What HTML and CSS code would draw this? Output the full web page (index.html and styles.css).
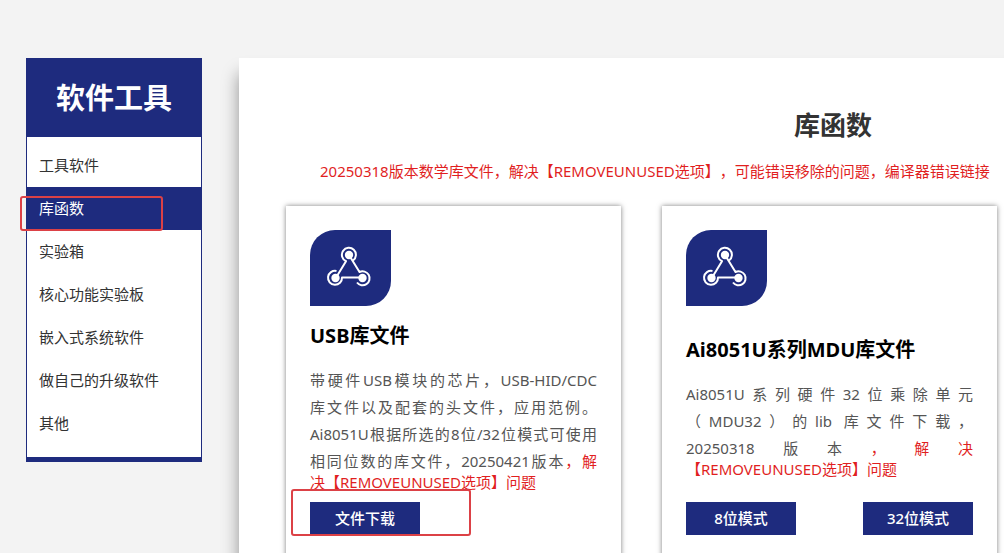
FILE: index.html
```html
<!DOCTYPE html>
<html lang="zh-CN">

<head>
    <meta charset="utf-8">
    <title>库函数</title>
    <link rel="stylesheet" href="styles.css">
</head>

<body>
    <svg class="sprite" aria-hidden="true">
        <symbol id="icon-nodes" viewBox="0 0 81 76">
            <g fill="none" stroke="#fff" stroke-width="2" stroke-linejoin="round">
                <path d="M27 46L36 31.200A7 7 0 1 1 43 30.500" />
                <path d="M39 25L49.500 42A7 7 0 1 1 47 52.500" />
                <path d="M53 47.500H32A7 7 0 1 1 26.500 41" />
            </g>
            <g fill="#fff">
                <circle cx="39" cy="25" r="4.200" />
                <circle cx="25.500" cy="48" r="4.200" />
                <circle cx="52.500" cy="48" r="4.200" />
            </g>
        </symbol>
    </svg>
    <div class="page">
        <div class="sidebar">
            <h2>软件工具</h2>
            <ul>
                <li><a href="#">工具软件</a></li>
                <li class="active"><a href="#">库函数</a><span class="mark mark-menu"></span></li>
                <li><a href="#">实验箱</a></li>
                <li><a href="#">核心功能实验板</a></li>
                <li><a href="#">嵌入式系统软件</a></li>
                <li><a href="#">做自己的升级软件</a></li>
                <li><a href="#">其他</a></li>
            </ul>
        </div>
        <div class="main">
            <h1>库函数</h1>
            <p class="notice">20250318版本数学库文件，解决【REMOVEUNUSED选项】，可能错误移除的问题，编译器错误链接</p>
            <div class="cards">
                <div class="card">
                    <div class="card-icon"><svg><use href="#icon-nodes" /></svg></div>
                    <div class="card-text">
                        <h3>USB库文件</h3>
                        <p>
                            <span>带硬件USB模块的芯片，USB-HID/CDC</span>
                            <span>库文件以及配套的头文件，应用范例。</span>
                            <span>Ai8051U根据所选的8位/32位模式可使用</span>
                            <span>相同位数的库文件，20250421版本<b>，解</b></span>
                            <b class="last">决【REMOVEUNUSED选项】问题</b>
                        </p>
                    </div>
                    <div class="card-btns">
                        <a href="#">文件下载</a>
                        <span class="mark mark-download"></span>
                    </div>
                </div>
                <div class="card">
                    <div class="card-icon"><svg><use href="#icon-nodes" /></svg></div>
                    <div class="card-text">
                        <h3>Ai8051U系列MDU库文件</h3>
                        <p>
                            <span>Ai8051U系列硬件32位乘除单元</span>
                            <span>（MDU32）的lib 库文件下载，</span>
                            <span>20250318版本<b>，解决</b></span>
                            <b class="last">【REMOVEUNUSED选项】问题</b>
                        </p>
                    </div>
                    <div class="card-btns">
                        <a href="#">8位模式</a>
                        <a href="#">32位模式</a>
                    </div>
                </div>
            </div>
        </div>
    </div>
</body>

</html>
```

FILE: styles.css
```css
* {
    margin: 0;
    padding: 0;
    box-sizing: border-box;
}

body {
    height: 100vh;
    overflow: hidden;
    background: #f3f3f3;
    color: #333;
    font-family: "Noto Sans", "Noto Sans CJK SC", sans-serif;
    font-size: 15px;
    text-spacing-trim: space-all;
}

a {
    color: inherit;
    text-decoration: none;
}

ul {
    list-style: none;
}

.sprite {
    display: none;
}

.page {
    display: flex;
    align-items: flex-start;
    gap: 37px;
    min-width: 1453px;
    padding: 58px 26px;
}

/* 左侧菜单 */
.sidebar {
    flex: 0 0 176px;
    border: 1px solid #1e2b7e;
    border-bottom-width: 5px;
    background: #fff;
}

.sidebar h2 {
    line-height: 78px;
    background: #1e2b7e;
    color: #fff;
    font-size: 29px;
    text-align: center;
}

.sidebar ul {
    padding: 7px 0 12px;
}

.sidebar li {
    position: relative;
}

.sidebar li a {
    display: block;
    padding-left: 12px;
    line-height: 43px;
}

.sidebar .active {
    background: #1e2b7e;
    color: #fff;
}

/* 右侧内容 */
.main {
    flex: 1;
    padding: 48px 47px;
    background: #fff;
    box-shadow: 0 16px 16px rgba(0, 0, 0, .4);
}

.main h1 {
    line-height: 38px;
    font-size: 26px;
    text-align: center;
}

.notice {
    margin: 16px 0 24px;
    padding-left: 34px;
    line-height: 22px;
    color: #e11f1f;
    white-space: nowrap;
}

.cards {
    display: grid;
    grid-template-columns: repeat(3, 1fr);
    gap: 41px;
    padding-right: 7px;
}

.card {
    display: flex;
    flex-direction: column;
    padding: 24px;
    background: #fff;
    box-shadow: 0 0 5px rgba(0, 0, 0, .5);
}

.card-icon {
    width: 81px;
    height: 76px;
    border-radius: 25px 0;
    background: #1e2b7e;
}

.card-icon svg {
    display: block;
    width: 100%;
    height: 100%;
}

.card-text {
    display: flex;
    flex: 1;
    flex-direction: column;
    justify-content: center;
    padding: 15px 0 12px;
}

.card-text h3 {
    margin-bottom: 16px;
    line-height: 30px;
    color: #000;
    font-size: 20px;
}

.card-text span {
    display: block;
    line-height: 27px;
    color: #555;
    text-align: justify;
    text-align-last: justify;
}

.card-text b {
    color: #e11f1f;
    font-weight: normal;
}

.card-text .last {
    display: block;
    line-height: 15px;
}

.card-btns {
    position: relative;
    display: flex;
    justify-content: space-between;
}

.card-btns a {
    width: 110px;
    line-height: 33px;
    background: #1e2b7e;
    color: #fff;
    font-weight: 500;
    text-align: center;
}

/* 红色标记框 */
.mark {
    position: absolute;
    border: 2px solid #dc4146;
    border-radius: 3px;
}

.mark-menu {
    left: -7px;
    top: 9px;
    width: 143px;
    height: 35px;
}

.mark-download {
    left: -19px;
    top: -13px;
    width: 180px;
    height: 47px;
}
```
